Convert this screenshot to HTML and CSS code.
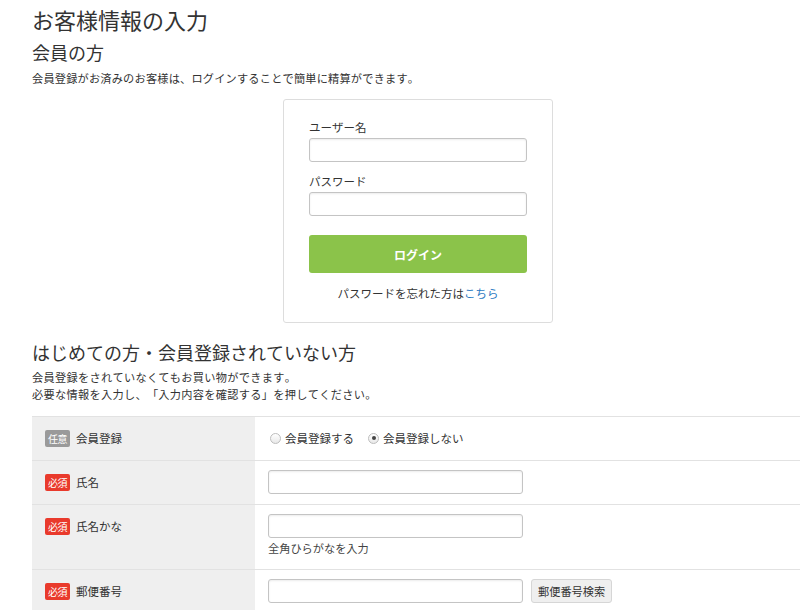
FILE: index.html
```html
<!DOCTYPE html>
<html lang="ja">
<head>
<meta charset="utf-8">
<title>お客様情報の入力</title>
<link rel="stylesheet" href="styles.css">
</head>
<body>
<div class="page">
  <h1 class="title">お客様情報の入力</h1>
  <h2 class="section">会員の方</h2>
  <p class="lead">会員登録がお済みのお客様は、ログインすることで簡単に精算ができます。</p>

  <div class="login-wrap">
    <div class="login">
      <label class="field-label">ユーザー名</label>
      <input class="text" type="text">
      <label class="field-label second">パスワード</label>
      <input class="text" type="password">
      <button class="login-btn" type="button">ログイン</button>
      <p class="forgot">パスワードを忘れた方は<a href="#" class="link">こちら</a></p>
    </div>
  </div>

  <h2 class="section section-2">はじめての方・会員登録されていない方</h2>
  <p class="lead lead-2">会員登録をされていなくてもお買い物ができます。<br>必要な情報を入力し、「入力内容を確認する」を押してください。</p>

  <div class="form">
    <div class="row">
      <div class="th"><span class="badge opt">任意</span><span class="th-text">会員登録</span></div>
      <div class="td radios">
        <span class="radio"></span><span class="radio-text">会員登録する</span>
        <span class="radio checked"></span><span class="radio-text">会員登録しない</span>
      </div>
    </div>
    <div class="row">
      <div class="th"><span class="badge req">必須</span><span class="th-text">氏名</span></div>
      <div class="td"><input class="text wide" type="text"></div>
    </div>
    <div class="row">
      <div class="th"><span class="badge req">必須</span><span class="th-text">氏名かな</span></div>
      <div class="td td-help"><input class="text wide" type="text"><p class="help">全角ひらがなを入力</p></div>
    </div>
    <div class="row">
      <div class="th"><span class="badge req">必須</span><span class="th-text">郵便番号</span></div>
      <div class="td zip"><input class="text wide" type="text"><button class="zip-btn" type="button">郵便番号検索</button></div>
    </div>
  </div>
</div>
</body>
</html>
```
FILE: styles.css
```css
* { box-sizing: border-box; }
html, body { margin: 0; padding: 0; }
body {
  font-family: "Noto Sans CJK JP", "Noto Sans", sans-serif;
  font-kerning: none;
  font-feature-settings: "palt" 0, "kern" 0;
  text-spacing-trim: space-all;
  color: #333;
  background: #fff;
  overflow: hidden;
  width: 800px;
  height: 610px;
}
.page {
  margin-left: 32px;
  width: 772px;
  padding-top: 6px;
}
.title {
  margin: 0;
  font-size: 22px;
  line-height: 26px;
  font-weight: normal;
  color: #333;
}
.section {
  margin: 9px 0 0;
  font-size: 18px;
  line-height: 22px;
  font-weight: normal;
  color: #333;
}
.lead {
  margin: 7px 0 0;
  font-size: 11.2px;
  line-height: 16px;
  letter-spacing: 0.2px;
  color: #333;
}
.login-wrap {
  display: flex;
  justify-content: center;
  margin-top: 13px;
}
.login {
  width: 270px;
  border: 1px solid #ddd;
  border-radius: 3px;
  padding: 19px 25px 21px;
  display: flex;
  flex-direction: column;
}
.field-label {
  display: block;
  font-size: 11.5px;
  line-height: 16px;
  color: #333;
}
.field-label.second { margin-top: 11px; }
.text {
  display: block;
  height: 24px;
  margin: 3px 0 0;
  border: 1px solid #c4c4c4;
  border-radius: 3px;
  box-shadow: inset 0 1px 2px rgba(0,0,0,0.08);
  background: #fff;
  padding: 0 6px;
  font: inherit;
  outline: none;
}
.login .text { width: 218px; }
.login-btn {
  margin-top: 19px;
  height: 38px;
  border: none;
  border-radius: 3px;
  background: #8bc34a;
  color: #fff;
  font-family: inherit;
  font-size: 12px;
  font-weight: bold;
  cursor: pointer;
}
.forgot {
  margin: 12px 0 0;
  text-align: center;
  font-size: 11.5px;
  line-height: 16px;
  color: #333;
}
.link { color: #2b79c2; text-decoration: none; }

.section-2 { margin-top: 18px; }
.lead-2 { margin-top: 6px; line-height: 17px; letter-spacing: 0.3px; }

.form {
  margin-top: 13px;
  border-top: 1px solid #e2e2e2;
}
.row {
  display: grid;
  grid-template-columns: 223px 1fr;
  border-bottom: 1px solid #e2e2e2;
}
.th {
  background: #efefef;
  padding: 13px 13px;
  display: flex;
  align-items: flex-start;
  font-size: 11.5px;
  line-height: 17px;
}
.badge {
  display: inline-block;
  height: 17px;
  line-height: 17px;
  padding: 0 3px;
  border-radius: 2px;
  color: #fff;
  font-size: 10px;
  margin-right: 6px;
  letter-spacing: -0.5px;
}
.badge.opt { background: #9a9a9a; }
.badge.req { background: #e93a2c; }
.th-text { color: #333; }
.td {
  padding: 9px 13px 10px;
  font-size: 11.5px;
  line-height: 24px;
}
.td .text { margin: 0; }
.wide { width: 255px; }
.radios {
  display: flex;
  align-items: center;
  color: #333;
}
.radio {
  width: 11px;
  height: 11px;
  border-radius: 50%;
  border: 1px solid #bdbdbd;
  background: linear-gradient(#fff, #e8e8e8);
  margin: 0 4px 0 2px;
  position: relative;
}
.radio.checked::after {
  content: "";
  position: absolute;
  left: 2.5px;
  top: 2.5px;
  width: 4px;
  height: 4px;
  border-radius: 50%;
  background: #444;
}
.radio-text { margin-right: 12px; }
.td-help { padding-bottom: 13px; }
.help {
  margin: 2px 0 0;
  font-size: 11.2px;
  line-height: 16px;
  color: #444;
}
.zip { display: flex; align-items: flex-start; }
.zip-btn {
  margin-left: 8px;
  height: 24px;
  padding: 0 6px;
  border: 1px solid #d6d6d6;
  border-radius: 3px;
  background: #efefef;
  color: #333;
  font-family: inherit;
  font-size: 11.2px;
}
```
